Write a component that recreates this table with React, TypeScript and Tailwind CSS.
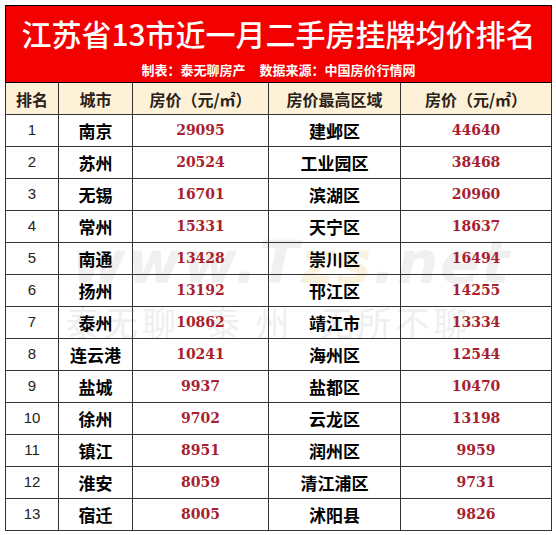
const ROWS = [
  { rank: 1, city: "南京", price: 29095, area: "建邺区", top: 44640 },
  { rank: 2, city: "苏州", price: 20524, area: "工业园区", top: 38468 },
  { rank: 3, city: "无锡", price: 16701, area: "滨湖区", top: 20960 },
  { rank: 4, city: "常州", price: 15331, area: "天宁区", top: 18637 },
  { rank: 5, city: "南通", price: 13428, area: "崇川区", top: 16494 },
  { rank: 6, city: "扬州", price: 13192, area: "邗江区", top: 14255 },
  { rank: 7, city: "泰州", price: 10862, area: "靖江市", top: 13334 },
  { rank: 8, city: "连云港", price: 10241, area: "海州区", top: 12544 },
  { rank: 9, city: "盐城", price: 9937, area: "盐都区", top: 10470 },
  { rank: 10, city: "徐州", price: 9702, area: "云龙区", top: 13198 },
  { rank: 11, city: "镇江", price: 8951, area: "润州区", top: 9959 },
  { rank: 12, city: "淮安", price: 8059, area: "清江浦区", top: 9731 },
  { rank: 13, city: "宿迁", price: 8005, area: "沭阳县", top: 9826 },
];

const CJK = "font-['Noto_Sans_CJK_SC',sans-serif]";
const NUM = "font-['DejaVu_Serif','Noto_Sans_CJK_SC',serif] font-bold text-[14px] text-[#a81f2f]";

export default function App() {
  return (
    <div className={`relative h-[535px] w-[556px] overflow-hidden bg-white pl-[5px] pt-[5px] ${CJK}`}>
      {/* watermark */}
      <div className="pointer-events-none absolute left-[72px] top-[234px] whitespace-nowrap font-['DejaVu_Sans',sans-serif] text-[58px] font-bold italic leading-none tracking-[2px] text-[#f0f0f0]">
        www.T<span className="text-[#f8f2de]">zs</span>.net
      </div>
      <div className="pointer-events-none absolute left-[66px] top-[305px] flex gap-[26px] whitespace-nowrap text-[34px] leading-none tracking-[4px] text-[#efefef]">
        <span>泰无聊</span>
        <span>泰 州</span>
        <span>无所不聊</span>
      </div>

      <table className="relative w-[546px] table-fixed border-collapse border border-black">
        <colgroup>
          <col className="w-[53px]" />
          <col className="w-[74px]" />
          <col className="w-[136px]" />
          <col className="w-[132px]" />
          <col className="w-[151px]" />
        </colgroup>
        <thead>
          <tr className="h-[77px] bg-[#f30000]">
            <th colSpan={5} className="border border-black p-0 text-white">
              <div className="pt-[1px] text-[30px] font-medium leading-[42px]">江苏省13市近一月二手房挂牌均价排名</div>
              <div className="mt-[8px] flex justify-center gap-[14px] text-[13px] font-bold leading-[16px]">
                <span>制表：泰无聊房产</span>
                <span>数据来源：中国房价行情网</span>
              </div>
            </th>
          </tr>
          <tr className="h-[32px] bg-[#fdf1d8] text-[16px] font-bold text-[#2a2218]">
            <th className="border border-[#333]">排名</th>
            <th className="border border-[#333]">城市</th>
            <th className="border border-[#333]">房价（元/㎡）</th>
            <th className="border border-[#333]">房价最高区域</th>
            <th className="border border-[#333]">房价（元/㎡）</th>
          </tr>
        </thead>
        <tbody>
          {ROWS.map((r) => (
            <tr key={r.rank} className="h-[32px] text-center">
              <td className="border border-[#333] font-['Liberation_Sans',sans-serif] text-[15px] text-[#222]">{r.rank}</td>
              <td className="border border-[#333] text-[17px] font-bold text-black">{r.city}</td>
              <td className={`border border-[#333] ${NUM}`}>{r.price}</td>
              <td className="border border-[#333] text-[17px] font-bold text-black">{r.area}</td>
              <td className={`border border-[#333] ${NUM}`}>{r.top}</td>
            </tr>
          ))}
        </tbody>
      </table>
    </div>
  );
}
